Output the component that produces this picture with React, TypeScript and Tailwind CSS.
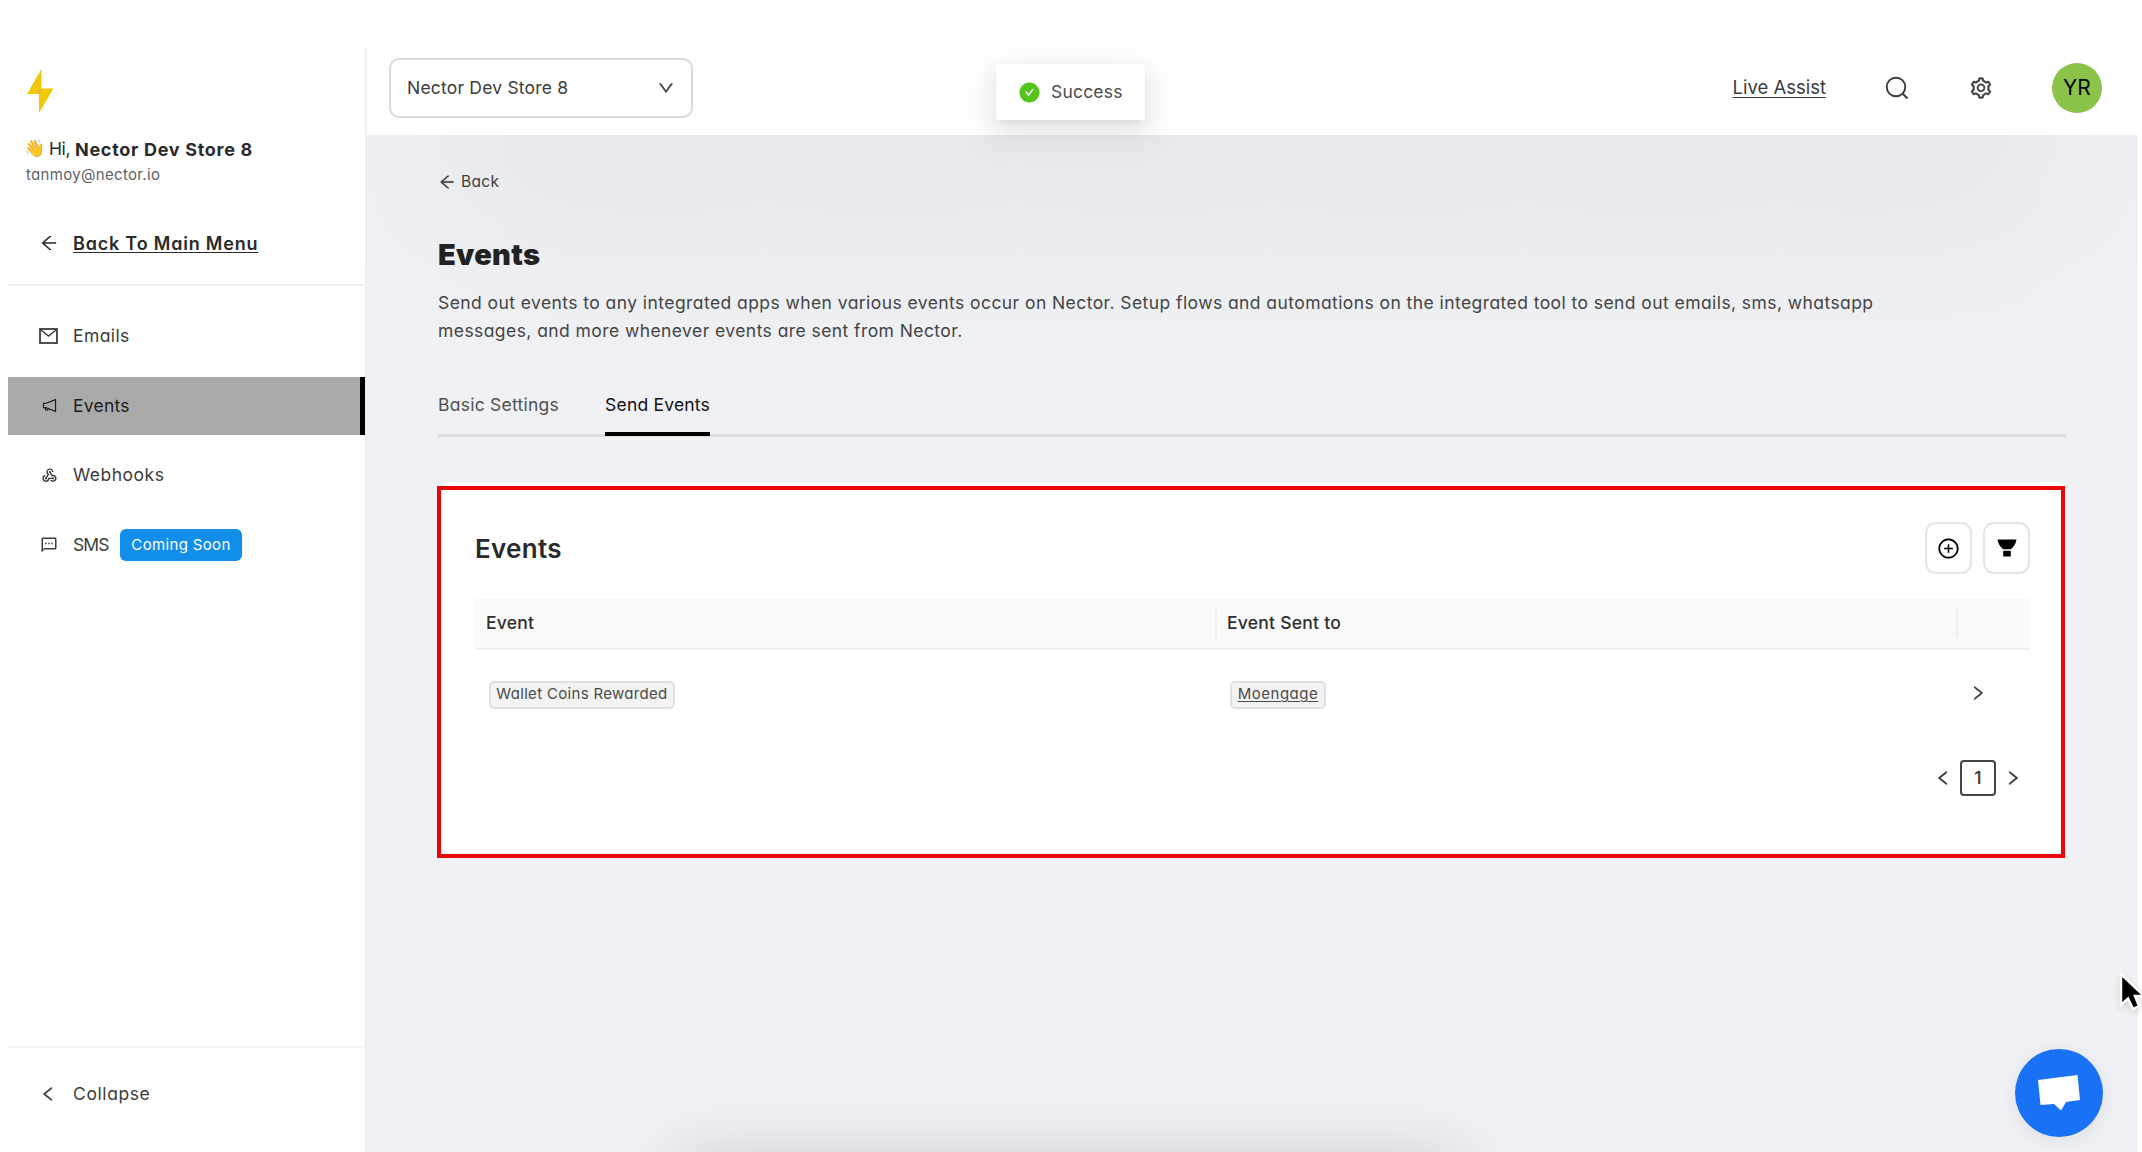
import React from 'react';
import {
    AiFillCheckCircle,
    AiOutlineArrowLeft,
    AiOutlineDown,
    AiOutlineLeft,
    AiOutlineNotification,
    AiOutlinePlusCircle,
    AiOutlineRight,
    AiOutlineSetting,
} from 'react-icons/ai';
import { MdOutlineTextsms, MdWebhook } from 'react-icons/md';

const MailIcon: React.FC = () => (
    <svg width="19" height="16" viewBox="0 0 19 16" fill="none" stroke="currentColor" strokeWidth="1.8">
        <rect x="1" y="1" width="17" height="14" />
        <path d="M2 2 L9.5 8 L17 2" strokeWidth="1.4" />
    </svg>
);

const SearchIcon: React.FC<{ className?: string }> = ({ className }) => (
    <svg className={className} width="24" height="24" viewBox="0 0 24 24" fill="none" stroke="currentColor" strokeWidth="1.9">
        <circle cx="11" cy="11" r="9.3" />
        <path d="M17.5 17.5 L22.5 22.5" />
    </svg>
);

const FilterIcon: React.FC = () => (
    <svg width="20" height="18" viewBox="0 0 20 18" fill="currentColor">
        <path d="M0.5 0.5 H19.5 C18.8 4.5 17 8 13.8 10.3 H6.2 C3 8 1.2 4.5 0.5 0.5 Z" />
        <rect x="6.2" y="11.8" width="7.6" height="5.6" rx="0.5" />
    </svg>
);

interface NavItemProps {
    icon: React.ReactNode;
    label: string;
    labelClass?: string;
    active?: boolean;
    children?: React.ReactNode;
}

const NavItem: React.FC<NavItemProps> = ({ icon, label, labelClass = '', active, children }) => (
    <a
        className={`flex h-[58px] items-center pl-[31px] text-[17.5px] ${
            active ? 'border-r-[5px] border-black bg-[#aaaaaa] text-[#1c1c1c]' : 'text-[#3c3c3c]'
        }`}
    >
        <span className="flex w-[34px] shrink-0">{icon}</span>
        <span className={labelClass}>{label}</span>
        {children}
    </a>
);

const Sidebar: React.FC = () => (
    <aside className="flex w-[359px] shrink-0 flex-col border-r-2 border-[#eeeef0] bg-white">
        <div className="pl-[18px] pt-[22px]">
            <svg width="28" height="44" viewBox="0 0 28 44">
                <path d="M15.5 0 L1 25 H13 V44 L27.5 19.5 H15.5 Z" fill="#f0c808" />
                <circle cx="14" cy="22.5" r="2.2" fill="#f3b32a" />
            </svg>
            <div className="mt-[22px] flex h-[28px] items-center text-[17.5px] text-[#2a2a2a]">
                <span className="-ml-0.5 w-[25px] text-[17px]">👋</span>
                <span className="w-[26px] tracking-[-0.4px]">Hi,</span>
                <b className="text-[18px] font-bold tracking-[0.7px]">Nector Dev Store 8</b>
            </div>
            <div className="flex h-[25px] items-center text-[15px] tracking-[0.32px] text-[#5f5f5f]">tanmoy@nector.io</div>
        </div>
        <a className="mt-[26px] flex h-[58px] items-center pl-[31px] text-[18px] font-semibold text-[#2a2a2a]">
            <span className="flex w-[34px]">
                <AiOutlineArrowLeft size={20} />
            </span>
            <span className="tracking-[0.8px] underline underline-offset-2">Back To Main Menu</span>
        </a>
        <div className="mt-[12px] h-[2px] bg-[#f0f0f0]" />
        <nav className="mt-[21px] flex flex-col gap-[11.8px]">
            <NavItem icon={<MailIcon />} label="Emails" labelClass="tracking-[0.4px]" />
            <NavItem icon={<AiOutlineNotification size={17} className="ml-0.5" />} label="Events" labelClass="tracking-[0.25px]" active />
            <NavItem icon={<MdWebhook size={17} className="ml-0.5" />} label="Webhooks" labelClass="tracking-[0.5px]" />
            <NavItem icon={<MdOutlineTextsms size={18} className="ml-px" />} label="SMS" labelClass="w-[47px] tracking-[-0.9px]">
                <span className="flex h-[32px] w-[122px] items-center justify-center rounded-md bg-[#108ee9] text-[15px] tracking-[0.35px] text-white">
                    Coming Soon
                </span>
            </NavItem>
        </nav>
        <div className="mt-auto h-[2px] bg-[#f3f3f3]" />
        <a className="mt-[17px] mb-[29px] flex h-[58px] items-center pl-[31px] text-[17.5px] text-[#3c3c3c]">
            <span className="flex w-[34px]">
                <AiOutlineLeft size={18} stroke="currentColor" strokeWidth={25} />
            </span>
            <span className="tracking-[0.6px]">Collapse</span>
        </a>
    </aside>
);

const Header: React.FC = () => (
    <header className="flex h-[88px] shrink-0 items-center bg-white pr-[36px] pl-[22px] text-[#3c3c3c]">
        <div className="mt-[-7px] flex h-[60px] w-[304px] items-center justify-between rounded-[10px] border-2 border-[#dadada] px-[16px] text-[17.5px] text-[#3c3c3c]">
            <span className="pt-px tracking-[0.2px]">Nector Dev Store 8</span>
            <AiOutlineDown size={18} stroke="currentColor" strokeWidth={20} />
        </div>
        <div className="mt-[-7px] ml-auto flex items-center">
            <a className="mr-[59px] pt-px text-[18.5px] underline underline-offset-3">Live Assist</a>
            <SearchIcon className="mr-[60px]" />
            <AiOutlineSetting size={24} stroke="currentColor" strokeWidth={15} className="mr-[59px]" />
            <span className="flex h-[50px] w-[50px] items-center justify-center rounded-full bg-[#8bc34a] text-[21px] text-black">
                YR
            </span>
        </div>
    </header>
);

const Tag: React.FC<{ children: React.ReactNode; className: string }> = ({ children, className }) => (
    <span
        className={`ml-[3px] flex h-[28px] items-center justify-center rounded-[5px] border-2 border-[#e0e0e0] bg-[#f3f3f3] text-[15px] text-[#4a4a4a] ${className}`}
    >
        {children}
    </span>
);

const EventsCard: React.FC = () => (
    <section className="relative mt-[45px] ml-[1px] h-[371px] w-[1627px] rounded-[10px] bg-white pr-[36px] pl-[36px]">
        <div className="flex h-[116px] items-center justify-between pt-[17px]">
            <h2 className="text-[26px] font-semibold tracking-[0.3px] text-[#2a2a2a]">Events</h2>
            <div className="mt-[-1px] flex gap-[11px] text-black">
                <button className="flex h-[52px] w-[47px] items-center justify-center rounded-[11px] border-2 border-[#e4e4e4]">
                    <AiOutlinePlusCircle size={23} stroke="currentColor" strokeWidth={4} />
                </button>
                <button className="flex h-[52px] w-[47px] items-center justify-center rounded-[11px] border-2 border-[#e4e4e4]">
                    <FilterIcon />
                </button>
            </div>
        </div>
        <div className="grid h-[52px] grid-cols-[742px_741px_1fr] items-center border-b-2 border-[#f0f0f0] bg-[#fafafa] text-[17.5px] font-medium tracking-[0.25px] text-[#2f2f2f]">
            <div className="flex h-[29px] items-center border-r-2 border-[#efefef] pl-[11px]">Event</div>
            <div className="flex h-[29px] items-center border-r-2 border-[#efefef] pl-[10px]">Event Sent to</div>
            <div />
        </div>
        <div className="grid h-[89px] grid-cols-[741px_741px_1fr] items-center text-[#3c3c3c]">
            <div className="pl-[11px]">
                <Tag className="w-[186px] tracking-[0.32px]">Wallet Coins Rewarded</Tag>
            </div>
            <div className="pl-[11px]">
                <Tag className="w-[96px] tracking-[0.5px] underline underline-offset-2">Moengage</Tag>
            </div>
            <AiOutlineRight size={18} stroke="currentColor" strokeWidth={25} className="mt-[-3px] ml-[12px]" />
        </div>
        <div className="mt-[21px] flex items-center justify-end pr-[8px] text-[#333]">
            <AiOutlineLeft size={18} stroke="currentColor" strokeWidth={25} />
            <span className="mx-[8px] flex h-[36px] w-[36px] items-center justify-center rounded-[4px] border-2 border-[#444] text-[17.5px] font-medium">
                1
            </span>
            <AiOutlineRight size={18} stroke="currentColor" strokeWidth={25} />
        </div>
        {/* Red highlight frame */}
        <div className="pointer-events-none absolute top-[4px] left-[-2px] h-[372px] w-[1628px] border-4 border-[#ea0606]" />
    </section>
);

const Toast: React.FC = () => (
    <div className="absolute top-[17px] left-[988px] flex h-[56px] w-[149px] items-center rounded-[3px] bg-white pl-[22px] text-[17.5px] tracking-[0.2px] text-[#4a4a4a] shadow-[0_4px_8px_-5px_rgba(0,0,0,0.12),0_8px_21px_rgba(0,0,0,0.08),0_12px_37px_11px_rgba(0,0,0,0.05)]">
        <AiFillCheckCircle size={23} className="mr-[10px] text-[#52c41a]" />
        Success
    </div>
);

export default function App() {
    return (
        <div className="h-[1152px] w-[2142px] overflow-hidden bg-white pt-[47px] pr-[4px] pl-[8px] font-['Inter','Open_Sans',sans-serif] [font-feature-settings:'cv11']">
            <div className="relative flex h-[1105px] overflow-hidden">
                <Sidebar />
                <div className="flex min-w-0 flex-1 flex-col">
                    <Header />
                    <main className="relative flex-1 overflow-hidden bg-[#f0f1f5] pl-[71px]">
                        {/* Ambient shadows at the top and bottom edges */}
                        <div className="absolute top-[-500px] right-[60px] left-[60px] h-[220px] shadow-[0_390px_180px_rgba(0,0,0,0.042)]" />
                        <div className="absolute top-[1022px] left-[309px] h-[60px] w-[786px] shadow-[0_0_66px_rgba(0,0,0,0.16)]" />
                        <div className="relative">
                            <a className="flex items-center pt-[36px] text-[15.5px] leading-[22px] tracking-[0.3px] text-[#3c3c3c]">
                                <AiOutlineArrowLeft size={18} stroke="currentColor" strokeWidth={15} className="mr-[5px]" />
                                Back
                            </a>
                            <h1 className="mt-[42px] text-[29px] leading-[40px] font-black tracking-[0.3px] text-[#222]">Events</h1>
                            <p className="mt-[14px] w-[1480px] text-[17.5px] leading-[27.5px] tracking-[0.427px] text-[#444]">
                                <span className="block whitespace-nowrap">
                                    Send out events to any integrated apps when various events occur on Nector. Setup flows and automations on the integrated tool to send out emails, sms, whatsapp
                                </span>
                                <span className="block whitespace-nowrap">
                                    messages, and more whenever events are sent from Nector.
                                </span>
                            </p>
                            <div className="mt-[35px] flex h-[58px] w-[1628px] border-b-[3px] border-[#dcdde0] text-[17.5px]">
                                <span className="mr-[46px] flex h-[52px] items-center tracking-[0.25px] text-[#505050]">Basic Settings</span>
                                <span className="flex h-[57px] items-center border-b-4 border-black tracking-[0.2px] text-[#111]">
                                    Send Events
                                </span>
                            </div>
                            <EventsCard />
                        </div>
                    </main>
                </div>
                <Toast />
                <button className="absolute right-[35px] bottom-[15px] flex h-[88px] w-[88px] items-center justify-center rounded-full bg-[#1972f5] shadow-[0_4px_20px_rgba(0,0,0,0.08)]">
                    <svg width="44" height="38" viewBox="0 0 44 38">
                        <path d="M1 6 L40.5 1 L43 26 L29 28 L24 36.5 L17 30 L3.5 31 Z" fill="#fff" />
                    </svg>
                </button>
            </div>
            {/* Mouse pointer */}
            <svg className="absolute top-[972px] left-[2119px] drop-shadow-md" width="23" height="40" viewBox="0 0 23 40">
                <path d="M2 2 V33 L9 26.5 L14 37 L20 34 L16 24 H25 Z" fill="#000" stroke="#fff" strokeWidth="2.5" />
            </svg>
        </div>
    );
}
